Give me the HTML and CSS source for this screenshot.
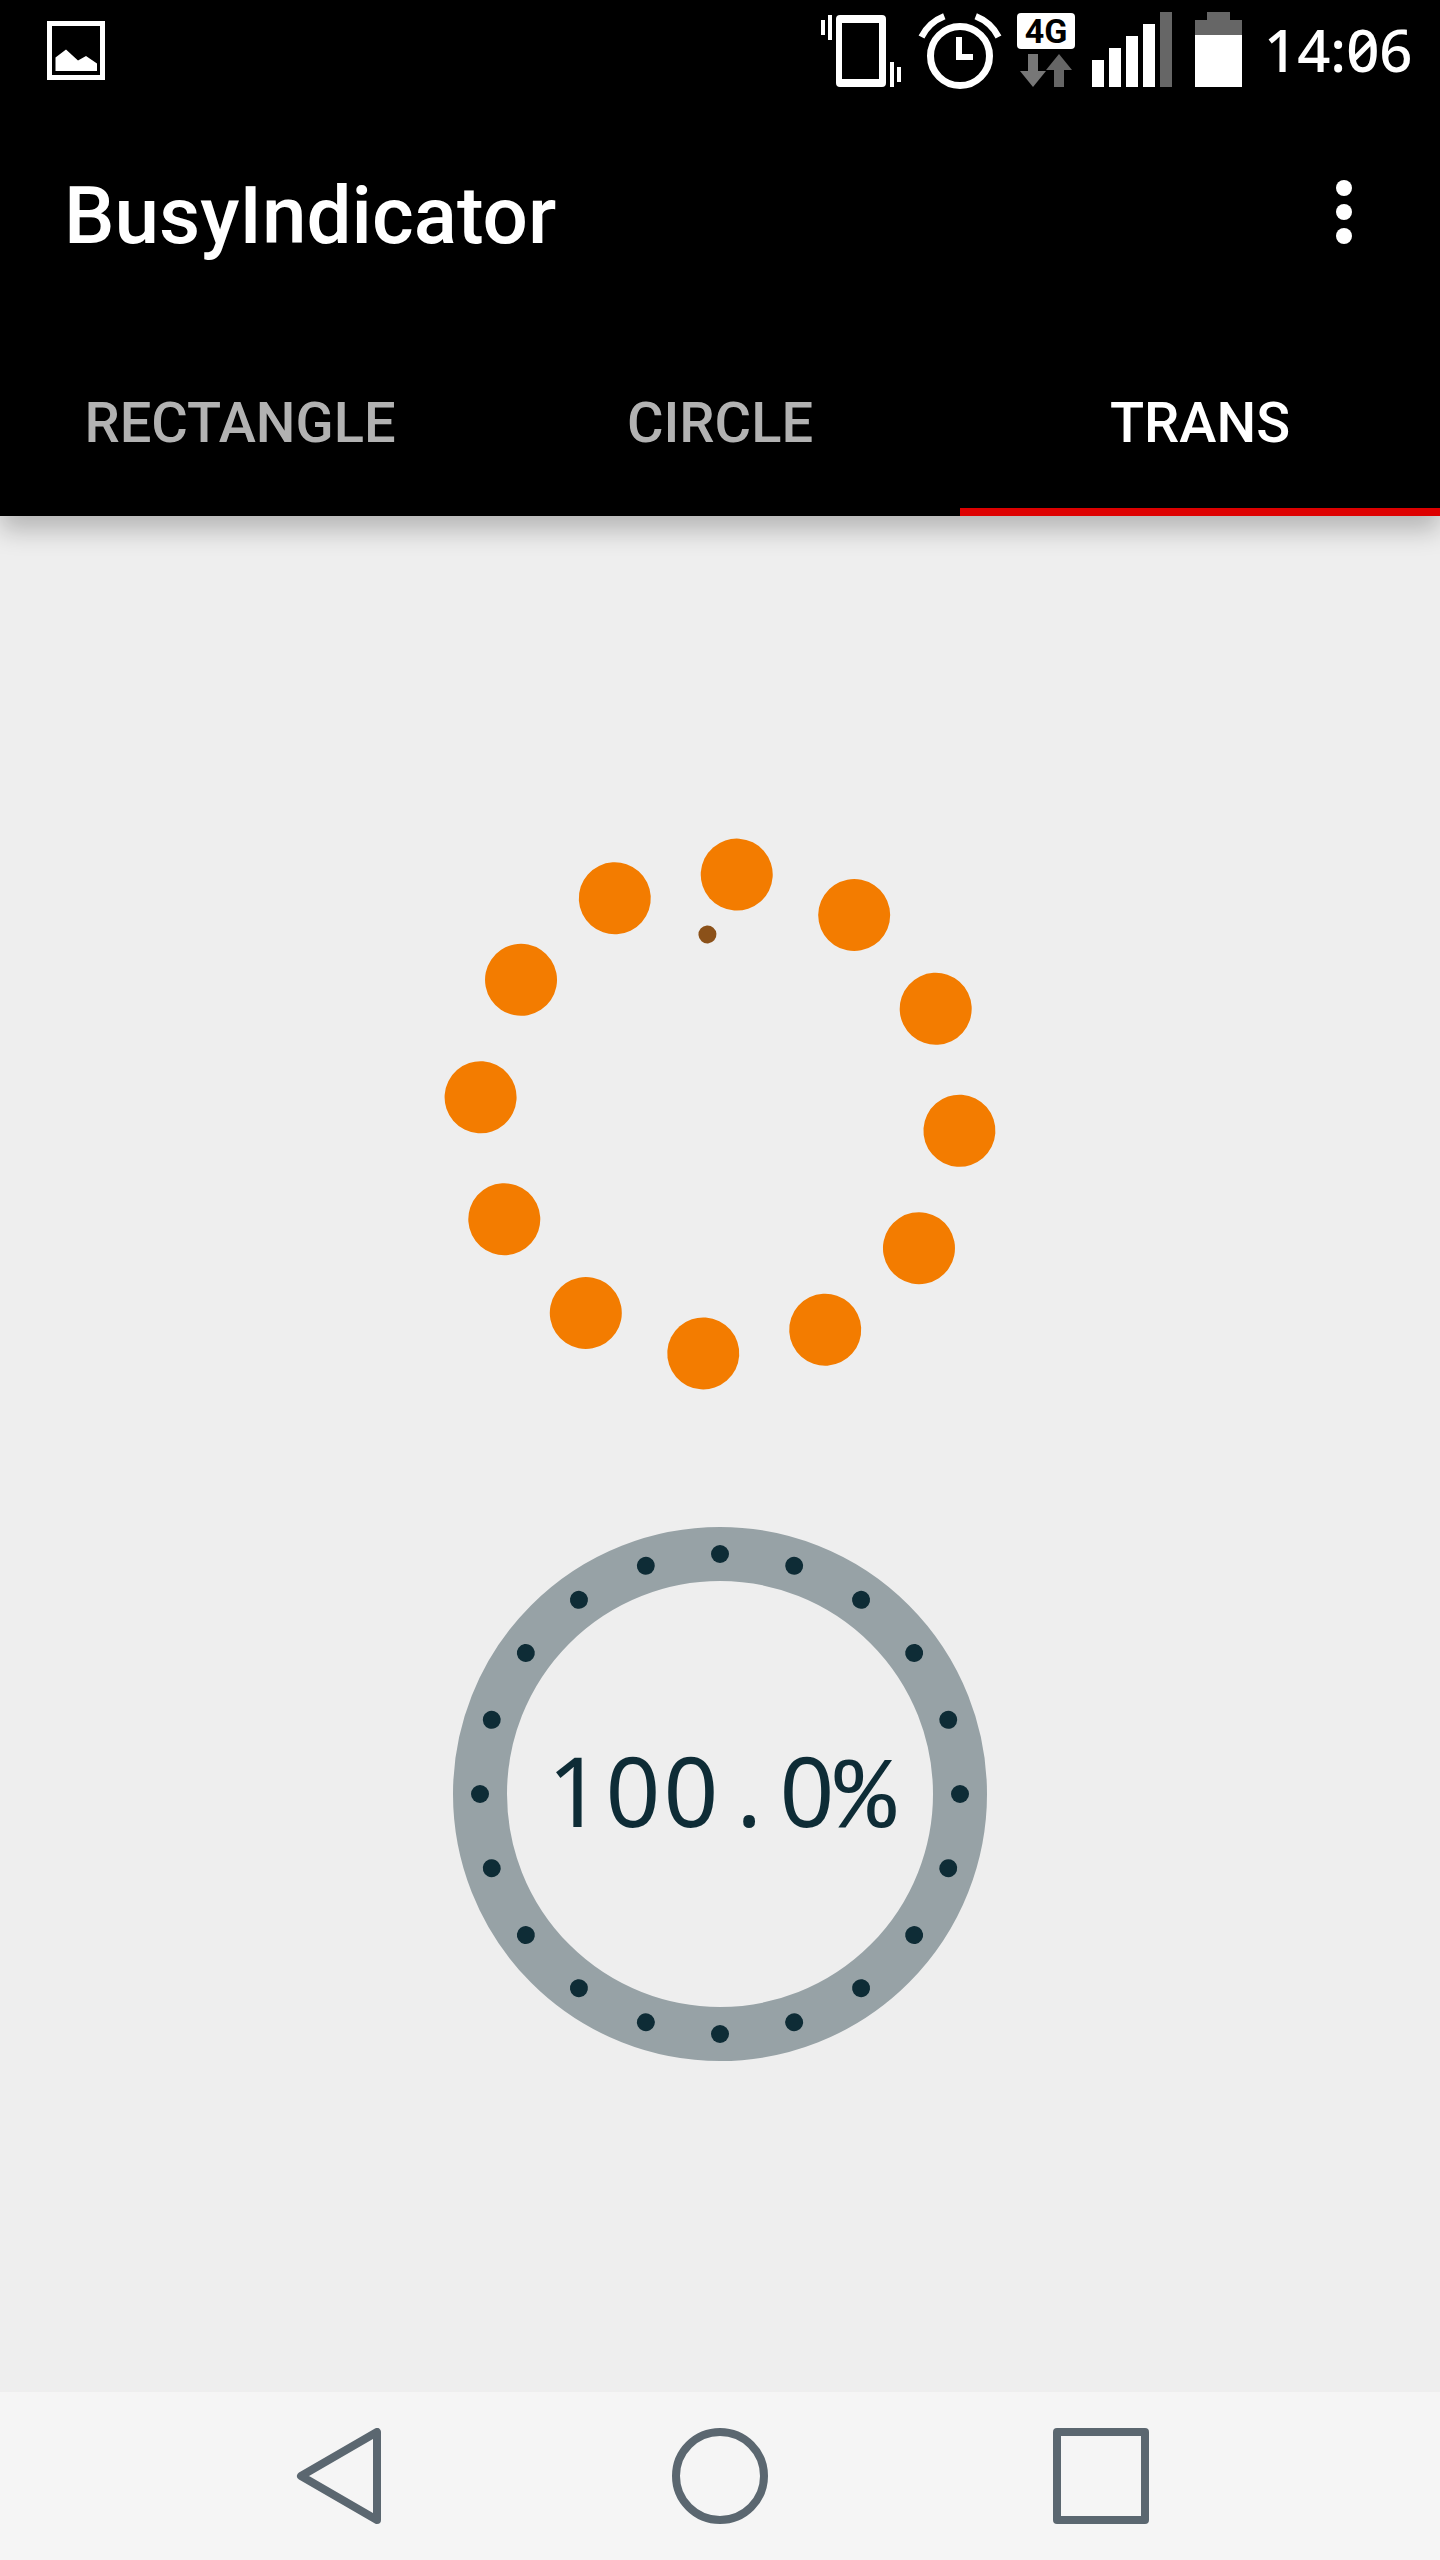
FILE: index.html
```html
<!DOCTYPE html>
<html lang="en">
<head>
<meta charset="utf-8">
<meta name="viewport" content="width=device-width, initial-scale=1">
<title>BusyIndicator</title>
<link rel="stylesheet" href="styles.css">
</head>
<body>
<header class="header">
  <div class="status">
    <svg class="status-icon" width="60" height="100" viewBox="46 0 60 100" role="img" aria-label="Screenshot saved">
      <rect x="49.5" y="23.5" width="53" height="54" fill="none" stroke="#fff" stroke-width="5"/>
      <path d="M55.5 71V57.5L66 49.5l12 11 8-4.500 11 7.500V71z" fill="#fff"/>
    </svg>
    <div class="status-right">
      <svg class="status-icon" width="80" height="100" viewBox="821 0 80 100" role="img" aria-label="Vibrate">
        <path fill="#fff" fill-rule="evenodd" d="M840 15h42a4 4 0 0 1 4 4v64a4 4 0 0 1-4 4h-42a4 4 0 0 1-4-4V19a4 4 0 0 1 4-4zM842 23v56h37V23z"/>
        <path fill="#fff" d="M821 20h4v15h-4zM828 15h4v25h-4zM890 62h4v25h-4zM897 67h4v15h-4z"/>
      </svg>
      <svg class="status-icon" width="84" height="100" viewBox="917 0 84 100" overflow="visible" role="img" aria-label="Alarm">
        <g fill="none" stroke="#fff">
          <circle cx="960" cy="56" r="29.500" stroke-width="7"/>
          <path stroke-width="6.500" d="M921.500 37A43 43 0 0 1 944.300 16.300M975.700 16.300A43 43 0 0 1 998.500 37"/>
          <path stroke-width="6" d="M959 37v20h14"/>
        </g>
      </svg>
      <svg class="status-icon" width="59" height="100" viewBox="1017 0 59 100" role="img" aria-label="4G data">
        <rect x="1017" y="13" width="58" height="36" rx="4" fill="#fff"/>
        <text class="network" x="1046" y="43">4G</text>
        <path fill="#777" d="M1028 54h10v17h8l-13 16-13-16h8z"/>
        <path fill="#666" d="M1059 54l13 16h-8v17h-10V70h-8z"/>
      </svg>
      <svg class="status-icon" width="80" height="100" viewBox="1092 0 80 100" role="img" aria-label="Signal strength">
        <path fill="#fff" d="M1092 60h12v27h-12zM1109 48h12v39h-12zM1126 36h12v51h-12zM1143 24h12v63h-12z"/>
        <path fill="#666" d="M1160 12h12v75h-12z"/>
      </svg>
      <svg class="status-icon" width="60" height="100" viewBox="1188 0 60 100" role="img" aria-label="Battery">
        <path fill="#666" d="M1207 12h23v8h12v15h-47V20h12z"/>
        <path fill="#fff" d="M1195 35h47v52h-47z"/>
      </svg>
      <time class="clock" datetime="14:06">14:06</time>
    </div>
  </div>
  <div class="toolbar">
    <h1 class="title">BusyIndicator</h1>
    <button class="menu" type="button" aria-label="More options">
      <svg width="16" height="64" viewBox="0 0 16 64" fill="#fff"><circle cx="8" cy="8" r="8"/><circle cx="8" cy="32" r="8"/><circle cx="8" cy="56" r="8"/></svg>
    </button>
  </div>
  <div class="tabs" role="tablist">
    <button class="tab" type="button" role="tab" aria-selected="false">RECTANGLE</button>
    <button class="tab" type="button" role="tab" aria-selected="false">CIRCLE</button>
    <button class="tab tab-active" type="button" role="tab" aria-selected="true">TRANS</button>
  </div>
</header>
<main class="content">
  <svg class="indicator" viewBox="-300 -300 600 600" role="img" aria-label="Loading">
    <defs><circle id="ball" cy="-240" r="36"/></defs>
    <g fill="#f37c00">
      <use href="#ball" transform="rotate(4)"/>
      <use href="#ball" transform="rotate(34)"/>
      <use href="#ball" transform="rotate(64)"/>
      <use href="#ball" transform="rotate(94)"/>
      <use href="#ball" transform="rotate(124)"/>
      <use href="#ball" transform="rotate(154)"/>
      <use href="#ball" transform="rotate(184)"/>
      <use href="#ball" transform="rotate(214)"/>
      <use href="#ball" transform="rotate(244)"/>
      <use href="#ball" transform="rotate(274)"/>
      <use href="#ball" transform="rotate(304)"/>
      <use href="#ball" transform="rotate(334)"/>
    </g>
    <circle cy="-180" r="9" transform="rotate(-4)" fill="#8b5119"/>
  </svg>
  <svg class="indicator" viewBox="-300 -300 600 600" role="img" aria-label="Progress 100.0%">
    <defs><g id="pair"><circle cy="-240" r="9"/><circle cy="240" r="9"/></g></defs>
    <circle r="240" fill="none" stroke="#97a2a6" stroke-width="54"/>
    <g fill="#0e2c36">
      <use href="#pair"/>
      <use href="#pair" transform="rotate(18)"/>
      <use href="#pair" transform="rotate(36)"/>
      <use href="#pair" transform="rotate(54)"/>
      <use href="#pair" transform="rotate(72)"/>
      <use href="#pair" transform="rotate(90)"/>
      <use href="#pair" transform="rotate(108)"/>
      <use href="#pair" transform="rotate(126)"/>
      <use href="#pair" transform="rotate(144)"/>
      <use href="#pair" transform="rotate(162)"/>
    </g>
    <text class="percent" x="-145 -87 -29 29 87 145" y="33">100.0<tspan class="percent-sign">%</tspan></text>
  </svg>
</main>
<nav class="navbar" aria-label="System">
  <button class="nav-button" type="button" aria-label="Back">
    <svg width="96" height="96" viewBox="0 0 96 96"><path d="M10 48L86 4v88z"/></svg>
  </button>
  <button class="nav-button" type="button" aria-label="Home">
    <svg width="96" height="96" viewBox="0 0 96 96"><circle cx="48" cy="48" r="44"/></svg>
  </button>
  <button class="nav-button" type="button" aria-label="Recent apps">
    <svg width="96" height="96" viewBox="0 0 96 96"><path d="M4 4h88v88H4z"/></svg>
  </button>
</nav>
</body>
</html>
```
FILE: styles.css
```css
* {
  box-sizing: border-box;
}

body {
  margin: 0;
  min-height: 100vh;
  display: flex;
  flex-direction: column;
  background: #eee;
  font-family: Roboto, "Liberation Sans", sans-serif;
}

button {
  margin: 0;
  padding: 0;
  border: 0;
  background: none;
  font: inherit;
  color: inherit;
  cursor: pointer;
}

svg {
  display: block;
}

.header {
  background: #000;
  color: #fff;
  box-shadow: 0 14px 24px rgba(0, 0, 0, 0.24);
}

.status {
  display: flex;
  justify-content: space-between;
  height: 100px;
  padding: 0 30px 0 46px;
}

.status-right {
  display: flex;
  gap: 16px;
}

.status-icon {
  flex: none;
}

.network {
  font-size: 34px;
  font-weight: 700;
  text-anchor: middle;
  fill: #000;
}

.clock {
  width: 146px;
  font-family: "Noto Sans", sans-serif;
  font-size: 58px;
  font-weight: 500;
  line-height: 100px;
  font-feature-settings: "zero";
  white-space: nowrap;
}

.toolbar {
  display: flex;
  align-items: center;
  justify-content: space-between;
  height: 224px;
  padding: 0 64px;
}

.title {
  margin: 0;
  padding-top: 8px;
  font-size: 80px;
  font-weight: 500;
  line-height: 96px;
}

.menu {
  display: flex;
  justify-content: center;
  width: 64px;
}

.tabs {
  display: grid;
  grid-template-columns: repeat(3, 1fr);
  height: 192px;
}

.tab {
  padding-top: 14px;
  border-bottom: 8px solid transparent;
  font-size: 56px;
  font-weight: 500;
  color: #b2b2b2;
}

.tab-active {
  border-bottom-color: #d00;
  color: #fff;
}

.content {
  flex: 1;
  display: flex;
  flex-direction: column;
  align-items: center;
  justify-content: center;
  gap: 80px;
}

.indicator {
  width: 100%;
  max-width: 600px;
}

.percent {
  font-family: "Noto Sans", sans-serif;
  font-size: 96px;
  text-anchor: middle;
  fill: #0e2c36;
}

.percent-sign {
  font-family: "Liberation Mono", monospace;
  font-size: 102px;
}

.navbar {
  display: grid;
  grid-template-columns: repeat(3, 1fr);
  height: 168px;
  padding: 0 148px;
  background: #f5f5f5;
}

.nav-button {
  display: flex;
  align-items: center;
  justify-content: center;
}

.nav-button svg {
  fill: none;
  stroke: #5b6770;
  stroke-width: 8px;
  stroke-linejoin: round;
}
```
